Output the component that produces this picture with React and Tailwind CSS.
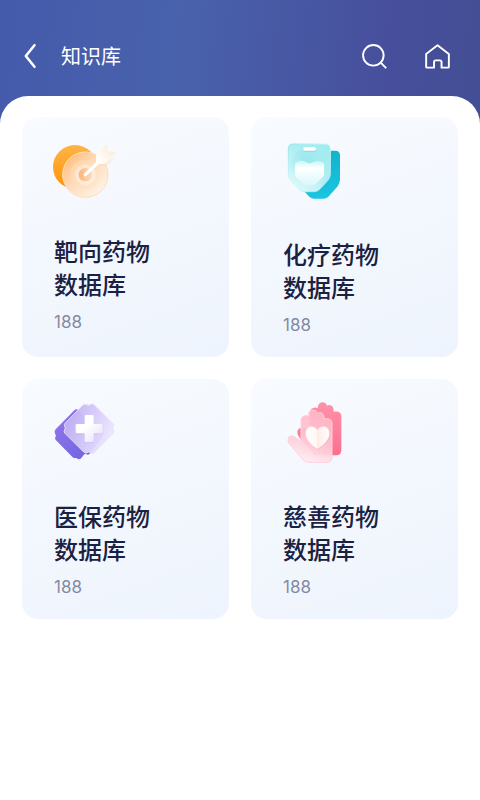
const TargetIcon = () => (
  <svg viewBox="42 33 198 183" className="w-[66px] h-[61px] overflow-visible" aria-hidden="true">
    <defs>
      <linearGradient id="t-back" x1="0" y1="0" x2="0" y2="1">
        <stop offset="0" stopColor="#ffb443" />
        <stop offset="1" stopColor="#ff920d" />
      </linearGradient>
      <linearGradient id="t-disc" x1="0.1" y1="0.2" x2="0.8" y2="0.9">
        <stop offset="0" stopColor="#ffc283" />
        <stop offset="0.45" stopColor="#fedcbd" />
        <stop offset="1" stopColor="#fff1e2" />
      </linearGradient>
      <linearGradient id="t-ring" x1="0" y1="0" x2="1" y2="1">
        <stop offset="0" stopColor="#ffe3c0" />
        <stop offset="1" stopColor="#ffdba6" />
      </linearGradient>
      <linearGradient id="t-mid" x1="0" y1="0" x2="1" y2="1">
        <stop offset="0" stopColor="#ffd3a6" />
        <stop offset="1" stopColor="#fee9d6" />
      </linearGradient>
      <linearGradient id="t-inner" x1="0" y1="0" x2="1" y2="1">
        <stop offset="0" stopColor="#ffe3c8" />
        <stop offset="1" stopColor="#fff0e3" />
      </linearGradient>
      <linearGradient id="t-core" x1="0" y1="0" x2="1" y2="0">
        <stop offset="0" stopColor="#fbb475" />
        <stop offset="1" stopColor="#fddcc0" />
      </linearGradient>
      <linearGradient id="t-dart" x1="0" y1="1" x2="1" y2="0">
        <stop offset="0" stopColor="#ffffff" />
        <stop offset="0.4" stopColor="#fff8f0" />
        <stop offset="1" stopColor="#ffe5c8" />
      </linearGradient>
    </defs>
    <circle cx="105" cy="111" r="66" fill="url(#t-back)" />
    <circle cx="136" cy="134" r="68" fill="url(#t-disc)" stroke="url(#t-ring)" strokeWidth="3" />
    <circle cx="136" cy="134" r="45" fill="url(#t-mid)" />
    <circle cx="136" cy="134" r="31" fill="url(#t-inner)" />
    <circle cx="136" cy="134" r="20" fill="url(#t-core)" />
    <path d="M176 106L228 78L206 104Z" fill="#f8c896" opacity="0.2" />
    <path d="M136 134L178 94" stroke="#fff" strokeWidth="10" strokeLinecap="round" />
    <path d="M168 99V75L201 42L204 63L228 67L197 99Q195 102 190 102H171Z" fill="url(#t-dart)" />
  </svg>
);

const ChemoIcon = () => (
  <svg viewBox="24 33 198 192" className="w-[66px] h-16 overflow-visible" aria-hidden="true">
    <defs>
      <linearGradient id="c-back" x1="0" y1="0" x2="0" y2="1">
        <stop offset="0" stopColor="#14b3ca" />
        <stop offset="1" stopColor="#19c5e3" />
      </linearGradient>
      <linearGradient id="c-front" x1="1" y1="0" x2="0.2" y2="1">
        <stop offset="0" stopColor="#9becef" />
        <stop offset="0.5" stopColor="#b2edf3" />
        <stop offset="1" stopColor="#e0f9fb" />
      </linearGradient>
      <linearGradient id="c-edge" x1="0" y1="0" x2="1" y2="1">
        <stop offset="0" stopColor="#8fe9ee" />
        <stop offset="0.5" stopColor="#d8f9fa" />
        <stop offset="1" stopColor="#8ee5ee" />
      </linearGradient>
      <linearGradient id="c-heart" x1="0" y1="0" x2="0" y2="1">
        <stop offset="0" stopColor="#c9f7f8" />
        <stop offset="0.3" stopColor="#ffffff" />
        <stop offset="1" stopColor="#d9f8fa" />
      </linearGradient>
      <radialGradient id="c-glow" cx="0.4" cy="0.35" r="0.45">
        <stop offset="0" stopColor="#6fdbe4" stopOpacity="0.35" />
        <stop offset="1" stopColor="#6fdbe4" stopOpacity="0" />
      </radialGradient>
    </defs>
    <path d="M92 62H181Q195 62 195 76V148Q195 161 187 170L160 200Q154 206 146 206H118Q109 206 103 200L84 180Z" fill="url(#c-back)" />
    <path d="M54 42H152Q166 42 166 56V132Q166 144 158 152L134 178Q127 185 118 185H88Q79 185 72 178L48 152Q40 144 40 132V56Q40 42 54 42Z" fill="url(#c-front)" stroke="url(#c-edge)" strokeWidth="3" />
    <circle cx="104" cy="114" r="62" fill="url(#c-glow)" />
    <rect x="86" y="54" width="38" height="11" rx="5" fill="#86dde6" />
    <rect x="85" y="51" width="38" height="11" rx="5" fill="#fff" />
    <path d="M60 103Q60 98 66 96Q80 89 93 96Q103 104 114 97Q129 91 142 97Q147 99 147 104V133Q147 138 143 142L122 162Q118 166 112 166H95Q89 166 85 162L64 142Q60 138 60 133Z" fill="url(#c-heart)" />
  </svg>
);

const InsuranceIcon = () => (
  <svg viewBox="42 39 198 192" className="w-[66px] h-16 overflow-visible" aria-hidden="true">
    <defs>
      <linearGradient id="i-back" x1="0" y1="0" x2="1" y2="1">
        <stop offset="0" stopColor="#9478eb" />
        <stop offset="1" stopColor="#6b60e0" />
      </linearGradient>
      <linearGradient id="i-front" x1="0.1" y1="0.3" x2="1" y2="0.7">
        <stop offset="0" stopColor="#c3b3f5" />
        <stop offset="0.5" stopColor="#d8cefa" />
        <stop offset="1" stopColor="#efecfd" />
      </linearGradient>
      <linearGradient id="i-cross" gradientUnits="userSpaceOnUse" x1="115" y1="80" x2="182" y2="152">
        <stop offset="0.4" stopColor="#ffffff" />
        <stop offset="1" stopColor="#e9e1fc" />
      </linearGradient>
    </defs>
    <path d="M103 61Q109 55 114 60L187 130Q192 136 187 141L149 191Q145 196 139 193Q134 191 131 195L124 204Q118 210 113 206Q109 202 104 205L98 202L48 151Q43 146 46 142Q50 138 46 133L44 127Q43 122 47 118Z" fill="url(#i-back)" />
    <path
      d="M127 47Q133 40 140 44Q147 48 154 43Q158 40 164 46L217 99Q223 104 219 110Q215 116 220 120Q225 125 219 130L163 187Q157 192 152 188Q146 184 140 189Q136 190 131 186L75 130Q70 125 74 120Q78 114 74 109Q71 104 76 99Z"
      fill="url(#i-front)"
      fillOpacity="0.95"
      stroke="#e5defc"
      strokeWidth="3"
    />
    <path d="M138 78H158Q162 78 162 82V105H186Q190 105 190 109V129Q190 133 186 133H162V155Q162 159 158 159H138Q134 159 134 155V133H112Q108 133 108 129V109Q108 105 112 105H134V82Q134 78 138 78Z" fill="#b9a6ef" opacity="0.25" />
    <rect x="107" y="102" width="81" height="28" rx="4" fill="url(#i-cross)" />
    <rect x="134" y="75" width="27" height="81" rx="4" fill="url(#i-cross)" />
  </svg>
);

const CharityIcon = () => (
  <svg viewBox="24 39 198 192" className="w-[66px] h-16 overflow-visible" aria-hidden="true">
    <defs>
      <linearGradient id="h-back" x1="0" y1="0" x2="0" y2="1">
        <stop offset="0" stopColor="#ff91a8" />
        <stop offset="1" stopColor="#fc6f91" />
      </linearGradient>
      <linearGradient id="h-front" x1="0.7" y1="0" x2="0.4" y2="1">
        <stop offset="0" stopColor="#ffb5c6" />
        <stop offset="0.55" stopColor="#ffc6d3" />
        <stop offset="1" stopColor="#ffeef2" />
      </linearGradient>
      <linearGradient id="h-heart" x1="0" y1="0" x2="1" y2="0">
        <stop offset="0" stopColor="#ffffff" />
        <stop offset="0.45" stopColor="#fff7f5" />
        <stop offset="0.5" stopColor="#ffece8" />
        <stop offset="1" stopColor="#ffffff" />
      </linearGradient>
    </defs>
    <path d="M104 75Q102 56 117 53Q123 52 128 55Q129 38 142 37Q152 37 156 47Q167 42 174 52Q176 57 176 65Q198 61 199 78V181Q199 196 184 196H120L76 146Q64 133 68 121Q71 113 82 113L104 116Z" fill="url(#h-back)" />
    <path
      d="M78 91Q78 78 90 77Q97 76 101 79Q99 60 113 60Q124 59 127 70Q140 64 146 75Q148 80 147 87Q170 82 171 100V202Q171 217 156 217H101Q91 217 83 208L42 160Q36 151 41 142Q48 133 59 141L78 156Z"
      fill="url(#h-front)"
      fillOpacity="0.93"
      stroke="#ffd1dc"
      strokeWidth="3"
    />
    <path d="M128 181C112 170 94 153 94 134C94 111 119 106 129 125C139 106 165 112 164 135C163 154 145 170 128 181Z" fill="#f795aa" opacity="0.25" />
    <path d="M127 177C110 165 92 150 92 131C92 107 118 103 127 121C137 103 163 107 163 131C163 150 145 165 127 177Z" fill="url(#h-heart)" />
  </svg>
);

const databases = [
  { key: 'target', name: '靶向药物', count: 188, Icon: TargetIcon },
  { key: 'chemo', name: '化疗药物', count: 188, Icon: ChemoIcon },
  { key: 'insurance', name: '医保药物', count: 188, Icon: InsuranceIcon },
  { key: 'charity', name: '慈善药物', count: 188, Icon: CharityIcon },
];

const DatabaseCard = ({ name, count, Icon }) => (
  <a
    href="#"
    className="flex flex-col items-start rounded-2xl bg-linear-160 from-[#f8fbff] to-[#eef4fd] pt-6 pb-5 px-8"
  >
    <Icon />
    <h2 className="mt-8 text-[24px] leading-[33px] font-medium text-[#1b2142]">
      {name}
      <br />
      数据库
    </h2>
    <p className="mt-[10px] text-[17px] leading-6 text-[#8489a3] font-[Inter,sans-serif]">{count}</p>
  </a>
);

const Header = () => (
  <header className="flex h-24 items-center pt-4 pl-[23px] pr-[30px] text-white">
    <button aria-label="返回" className="shrink-0">
      <svg width="14" height="26" viewBox="0 0 14 26" fill="none" stroke="currentColor" strokeWidth="2.6" strokeLinecap="round" strokeLinejoin="round">
        <path d="M11.5 2.2L2.8 13L11.5 23.8" />
      </svg>
    </button>
    <h1 className="ml-6 flex-1 text-[20px] leading-7">知识库</h1>
    <button aria-label="搜索" className="shrink-0">
      <svg width="25" height="25" viewBox="0 0 26 26" fill="none" stroke="currentColor" strokeWidth="2" strokeLinecap="round">
        <circle cx="11.8" cy="11.8" r="10.7" />
        <path d="M19.4 19.4L24.6 24.6" />
      </svg>
    </button>
    <button aria-label="首页" className="ml-[38px] shrink-0">
      <svg width="25" height="25" viewBox="0 0 26 26" fill="none" stroke="currentColor" strokeWidth="2" strokeLinejoin="round">
        <path d="M1.2 10.4L13 1.4L24.8 10.4V23.8Q24.8 24.6 24 24.6H17.2V18.8Q17.2 17 15.4 17H11.2Q9.4 17 9.4 18.8V24.6H2Q1.2 24.6 1.2 23.8Z" />
      </svg>
    </button>
  </header>
);

export default function App() {
  return (
    <div className="flex min-h-screen flex-col bg-[linear-gradient(95deg,#445aab_0%,#4962ac_32%,#474f9c_72%,#404e8e_100%)] font-['Noto_Sans_CJK_SC',sans-serif]">
      <Header />
      <main className="flex-1 rounded-t-[28px] bg-white px-[22px] pt-[21px] pb-6">
        <div className="grid grid-cols-2 gap-[22px]">
          {databases.map(({ key, ...db }) => (
            <DatabaseCard key={key} {...db} />
          ))}
        </div>
      </main>
    </div>
  );
}
